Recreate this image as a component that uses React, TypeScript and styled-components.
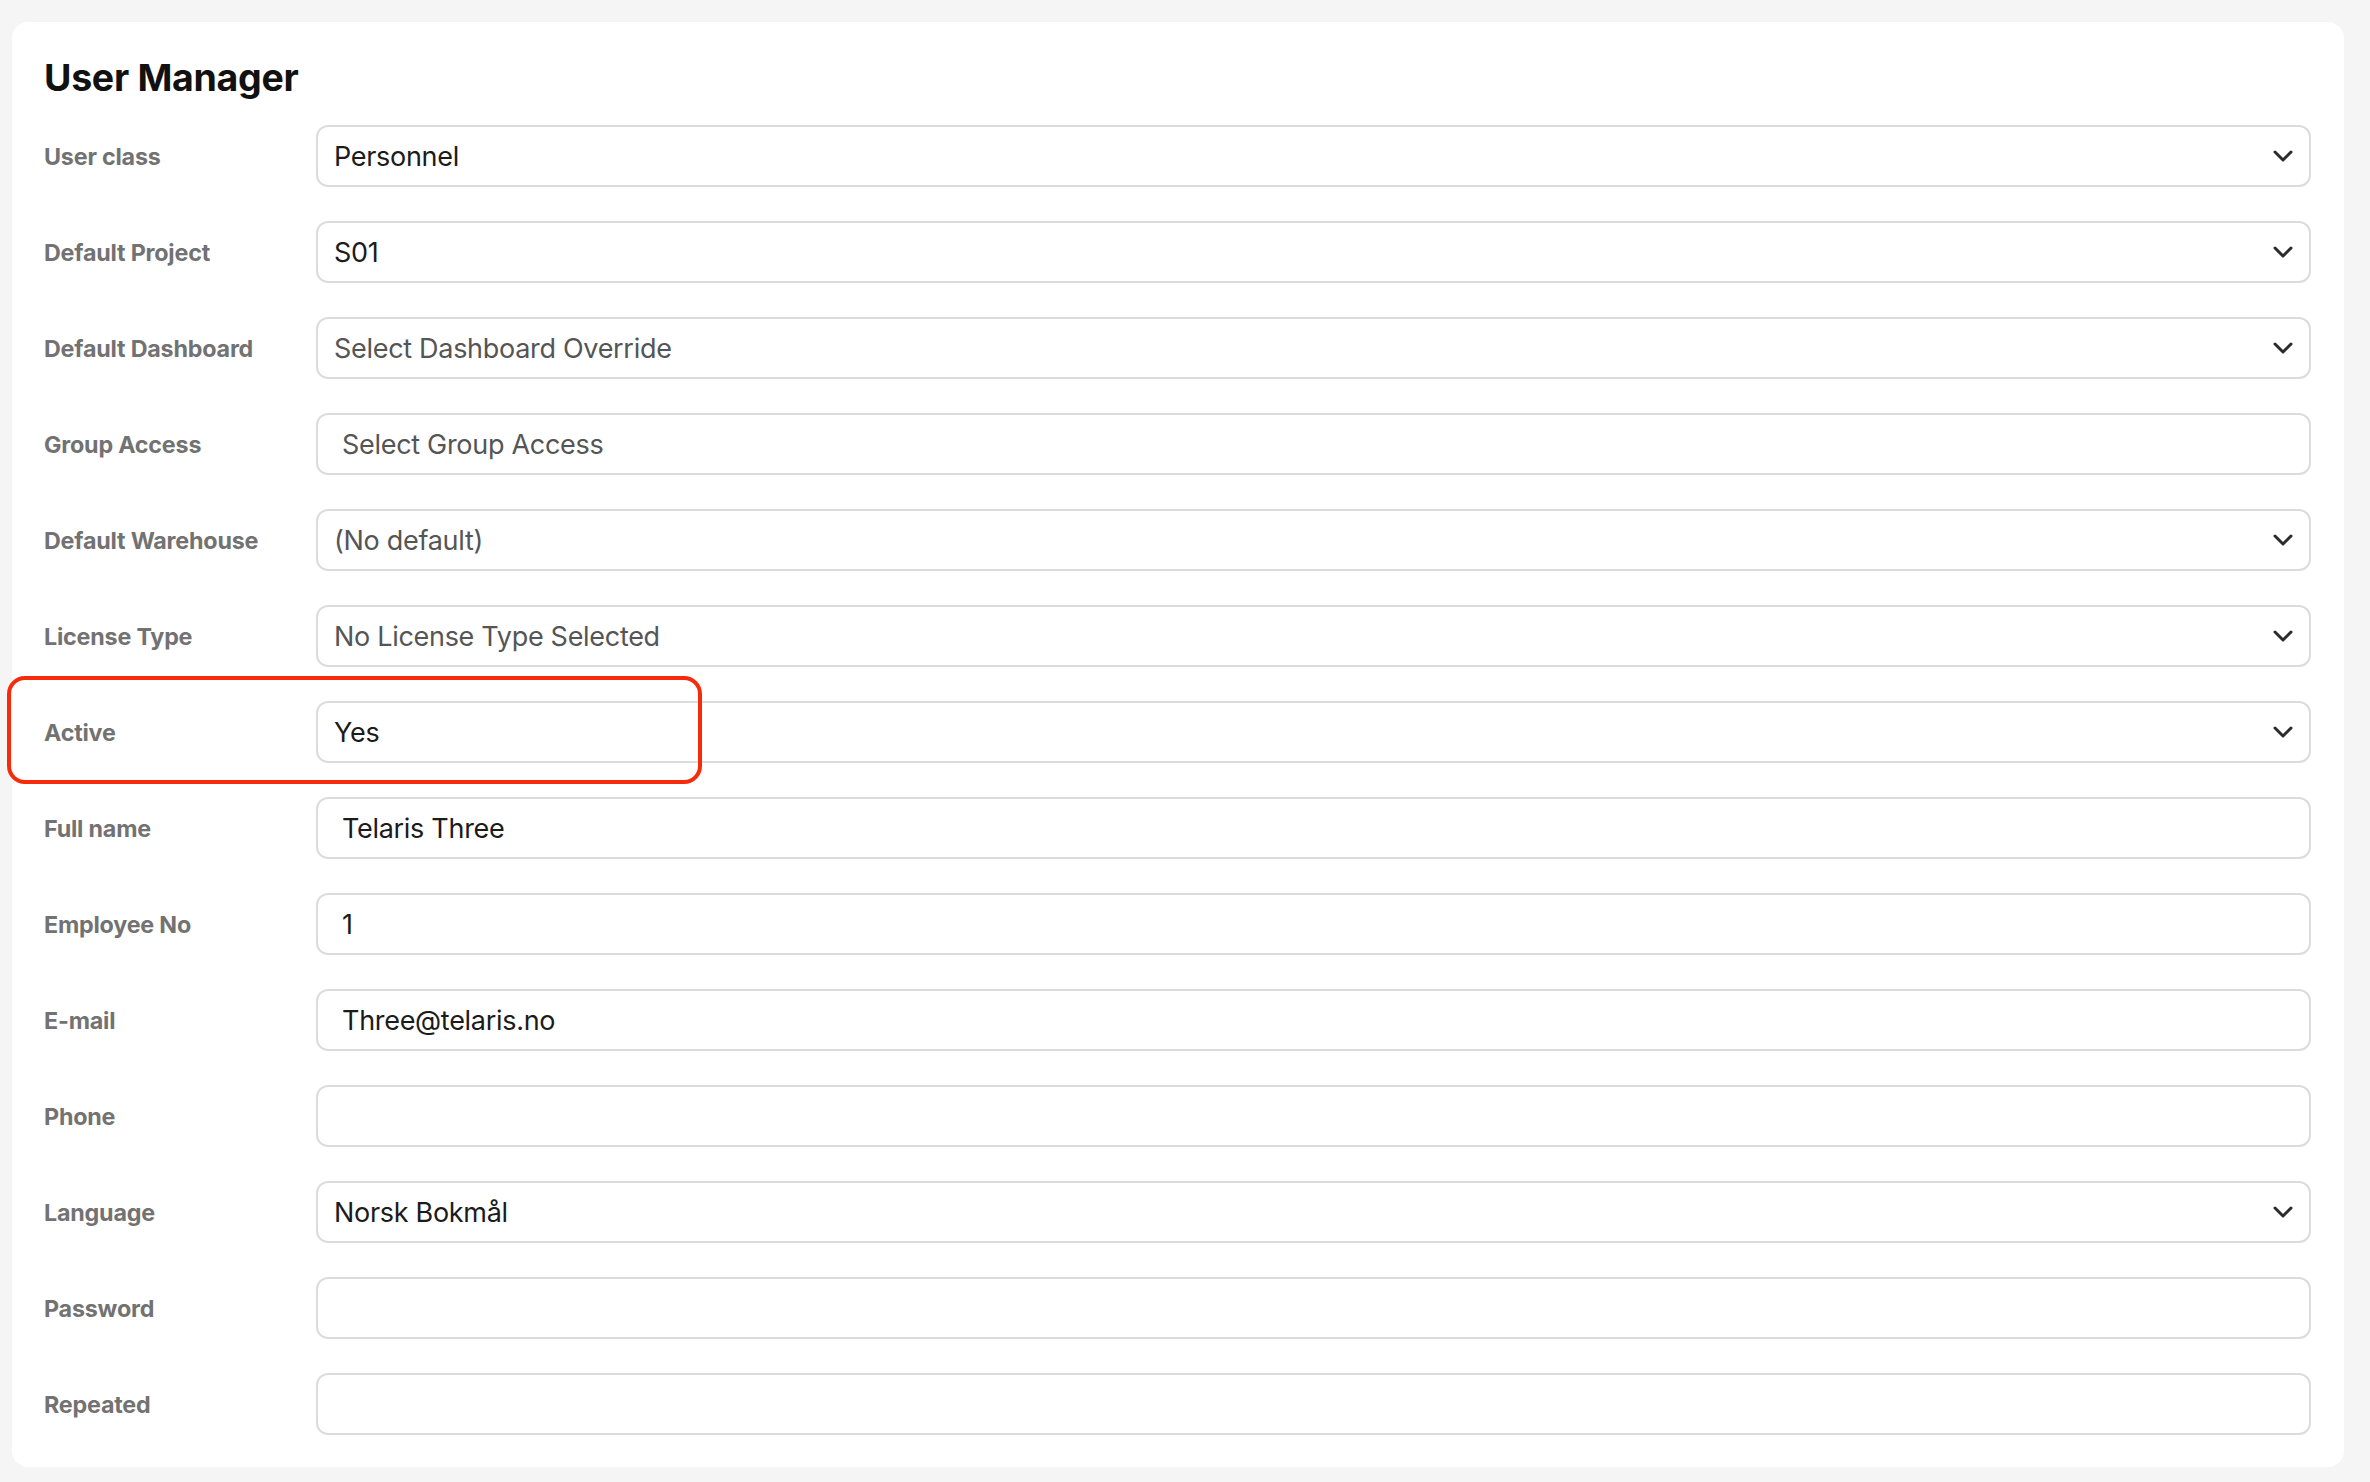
import React from "react";
import styled, { createGlobalStyle } from "styled-components";

const GlobalStyle = createGlobalStyle`
  html, body {
    margin: 0;
    padding: 0;
    background: #f4f5f4;
    font-family: Inter, "Noto Sans", "Liberation Sans", sans-serif;
  }
`;

const Page = styled.div`
  padding: 22px 26px 14px 12px;
`;

const Card = styled.section`
  background: #ffffff;
  border-radius: 16px;
  padding: 32px 33px 32px 32px;
`;

const Title = styled.h1`
  margin: 2px 0 25px;
  font-size: 37.5px;
  line-height: 44px;
  font-weight: 700;
  color: #111111;
  letter-spacing: -0.3px;
`;

const Form = styled.div`
  display: flex;
  flex-direction: column;
  gap: 34px;
`;

const Row = styled.div`
  position: relative;
  display: grid;
  grid-template-columns: 272px 1fr;
  align-items: center;
`;

const Label = styled.label`
  font-size: 23.3px;
  font-weight: 700;
  color: #727272;
  letter-spacing: -0.2px;
`;

const Field = styled.div<{ $select?: boolean; $muted?: boolean }>`
  box-sizing: border-box;
  height: 62px;
  display: flex;
  align-items: center;
  justify-content: space-between;
  padding: 0 ${(p) => (p.$select ? "16px" : "24px")};
  border: 2px solid #dcdcdc;
  border-radius: 12px;
  background: #ffffff;
  font-size: 27px;
  letter-spacing: -0.3px;
  color: ${(p) => (p.$muted ? "#555555" : "#1b1b1b")};
`;

/* red marker drawn around the "Active" row */
const Highlight = styled.div`
  position: absolute;
  top: -25px;
  bottom: -21px;
  left: -37px;
  width: 695px;
  border: 4px solid #f72b0c;
  border-radius: 18px;
  box-sizing: border-box;
  pointer-events: none;
`;

const Chevron = () => (
  <svg width="20" height="12" viewBox="0 0 20 12" fill="none">
    <polyline
      points="2,2 10,10 18,2"
      stroke="#2b2b2b"
      strokeWidth="3"
      strokeLinecap="round"
      strokeLinejoin="round"
    />
  </svg>
);

type FieldDef = {
  label: string;
  value?: string;
  select?: boolean;
  muted?: boolean;
  highlight?: boolean;
};

const fields: FieldDef[] = [
  { label: "User class", value: "Personnel", select: true },
  { label: "Default Project", value: "S01", select: true },
  { label: "Default Dashboard", value: "Select Dashboard Override", select: true, muted: true },
  { label: "Group Access", value: "Select Group Access", muted: true },
  { label: "Default Warehouse", value: "(No default)", select: true, muted: true },
  { label: "License Type", value: "No License Type Selected", select: true, muted: true },
  { label: "Active", value: "Yes", select: true, highlight: true },
  { label: "Full name", value: "Telaris Three" },
  { label: "Employee No", value: "1" },
  { label: "E-mail", value: "Three@telaris.no" },
  { label: "Phone" },
  { label: "Language", value: "Norsk Bokmål", select: true },
  { label: "Password" },
  { label: "Repeated" },
];

export default function App() {
  return (
    <>
      <GlobalStyle />
      <Page>
        <Card>
          <Title>User Manager</Title>
          <Form>
            {fields.map((f) => (
              <Row key={f.label}>
                <Label>{f.label}</Label>
                <Field $select={f.select} $muted={f.muted}>
                  <span>{f.value}</span>
                  {f.select && <Chevron />}
                </Field>
                {f.highlight && <Highlight />}
              </Row>
            ))}
          </Form>
        </Card>
      </Page>
    </>
  );
}
